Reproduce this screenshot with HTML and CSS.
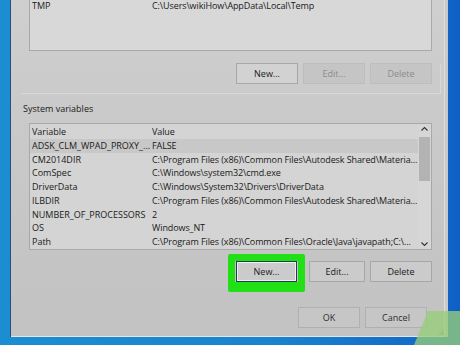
FILE: index.html
```html
<!DOCTYPE html>
<html>
<head>
<meta charset="utf-8">
<link rel="stylesheet" href="styles.css">
</head>
<body>
<div class="screen">
  <div class="dialog">
    <div class="listbox user-list">
      <div class="row tmp"><span class="c1">TMP</span><span class="c2">C:\Users\wikiHow\AppData\Local\Temp</span></div>
    </div>
    <div class="btnrow top-btns">
      <button class="btn">New...</button>
      <button class="btn disabled">Edit...</button>
      <button class="btn disabled">Delete</button>
    </div>
    <div class="sep"></div>
    <div class="label">System variables</div>
    <div class="listbox sys-list">
      <div class="table">
        <div class="row head"><span class="c1">Variable</span><span class="c2">Value</span></div>
        <div class="row selected"><span class="c1">ADSK_CLM_WPAD_PROXY_...</span><span class="c2">FALSE</span></div>
        <div class="row"><span class="c1">CM2014DIR</span><span class="c2">C:\Program Files (x86)\Common Files\Autodesk Shared\Materia...</span></div>
        <div class="row"><span class="c1">ComSpec</span><span class="c2">C:\Windows\system32\cmd.exe</span></div>
        <div class="row"><span class="c1">DriverData</span><span class="c2">C:\Windows\System32\Drivers\DriverData</span></div>
        <div class="row"><span class="c1">ILBDIR</span><span class="c2">C:\Program Files (x86)\Common Files\Autodesk Shared\Materia...</span></div>
        <div class="row"><span class="c1">NUMBER_OF_PROCESSORS</span><span class="c2">2</span></div>
        <div class="row"><span class="c1">OS</span><span class="c2">Windows_NT</span></div>
        <div class="row"><span class="c1">Path</span><span class="c2">C:\Program Files (x86)\Common Files\Oracle\Java\javapath;C:\...</span></div>
      </div>
      <div class="scrollbar">
        <svg class="arrow" width="13" height="10" viewBox="0 0 13 10"><path d="M3.5 6.5 L6.5 3.5 L9.5 6.5" fill="none" stroke="#333" stroke-width="1.1"/></svg>
        <div class="track"><div class="thumb"></div></div>
        <svg class="arrow" width="13" height="10" viewBox="0 0 13 10"><path d="M3.5 3.5 L6.5 6.5 L9.5 3.5" fill="none" stroke="#333" stroke-width="1.1"/></svg>
      </div>
    </div>
    <div class="btnrow sys-btns">
      <div class="highlight-wrap"><button class="btn focused">New...</button></div>
      <button class="btn edit2">Edit...</button>
      <button class="btn">Delete</button>
    </div>
    <div class="btnrow ok-btns">
      <button class="btn plain">OK</button>
      <button class="btn plain">Cancel</button>
    </div>
    <div class="grip"></div>
  </div>
</div>
<svg class="watermark" width="46" height="34" viewBox="0 0 46 34"><polygon points="14,0 46,0 46,34 0,34" fill="rgba(150,205,120,0.78)"/></svg>
</body>
</html>
```
FILE: styles.css
```css
* { box-sizing: border-box; }
html, body { margin: 0; padding: 0; }
body {
  width: 460px;
  height: 345px;
  overflow: hidden;
  background: linear-gradient(to right, #1b8ed3 0%, #1883cf 60%, #1268c9 95%, #0f5fc6 100%);
  font-family: "Open Sans", "Noto Sans", sans-serif;
  font-size: 9px;
  color: #1a1a1a;
  position: relative;
}
.screen {
  padding: 0 12px 8px 10px;
}
.dialog {
  position: relative;
  height: 337px;
  background: linear-gradient(to bottom, #cfcfcf 0%, #c9c9c9 40%, #c2c2c2 100%);
  border-left: 1px solid #2a4f70;
  box-shadow: inset -3px 0 0 #c9c9c9, inset -4px 0 0 #dedede, inset 0 -1px 0 #e6e6e6;
  padding: 0 16px 0 18px;
  display: flex;
  flex-direction: column;
}
.listbox {
  border: 1px solid #a9a9a9;
  background: #d7d7d7;
  overflow: hidden;
}
.user-list {
  height: 51px;
  border-top: none;
  background: #d8d8d8;
}
.row {
  display: flex;
  height: 13.75px;
  line-height: 13.75px;
  white-space: nowrap;
  padding-left: 2px;
}
.row .c1 { width: 120px; flex: none; overflow: hidden; }
.row .c2 { flex: 1; overflow: hidden; letter-spacing: -0.1px; }
.row.tmp { height: 11px; line-height: 11px; }
.btnrow {
  display: flex;
  justify-content: flex-end;
}
.btn {
  font-family: inherit;
  font-size: 9px;
  color: #1a1a1a;
  height: 21px;
  width: 62px;
  padding: 0;
  border: 1px solid #a7a7a7;
  background: #d2d2d2;
  margin: 0;
}
.top-btns { margin-top: 12px; gap: 5px; }
.top-btns .btn.disabled {
  background: #c5c5c5;
  border-color: #bdbdbd;
  color: #8c8c8c;
}
.sep {
  position: relative;
  margin: 9px -9px 0 -8px;
  height: 1px;
  background: #d9d9d9;
}
.sep::after {
  content: "";
  position: absolute;
  right: 0;
  bottom: 0;
  width: 1px;
  height: 30px;
  background: #d9d9d9;
}
.label {
  margin-top: 9px;
  margin-left: -6px;
  line-height: 12px;
  height: 12px;
}
.sys-list {
  margin-top: 8px;
  height: 127px;
  display: flex;
  background: #d4d4d4;
}
.table {
  flex: 1;
  padding-top: 1px;
  overflow: hidden;
}
.row.selected { background: #c8c8c8; }
.scrollbar {
  width: 13px;
  flex: none;
  display: flex;
  flex-direction: column;
  background: #d6d6d6;
}
.arrow { display: block; flex: none; }
.track { flex: 1; padding-top: 3px; }
.thumb {
  height: 44px;
  background: #b3b3b3;
  margin: 0 1px;
}
.sys-btns {
  margin-top: 11px;
  align-items: flex-start;
}
.highlight-wrap {
  position: relative;
  margin-right: 12px;
}
.highlight-wrap::before {
  content: "";
  position: absolute;
  left: -8px;
  right: -8px;
  top: -7px;
  bottom: -10px;
  border: 7px solid #22e016;
  border-bottom-width: 10px;
  border-radius: 2px;
}
.btn.focused {
  width: 61px;
  background: #e4e4e4;
  border: 1px solid #1f3b58;
  box-shadow: inset 0 0 0 1px #f0f0f0;
}
.sys-btns .btn.edit2 { width: 56px; margin-right: 5px; background: #cbcbcb; }
.sys-btns .btn:last-child { background: #cbcbcb; }
.ok-btns {
  margin-top: 25px;
  margin-right: 5px;
  gap: 5px;
}
.btn.plain {
  background: #c6c6c6;
  border-color: #b0b0b0;
  color: #303030;
}
.grip {
  position: absolute;
  right: 4px;
  bottom: 2px;
  width: 6px;
  height: 6px;
  background: radial-gradient(circle, #8a8a8a 0.6px, transparent 0.9px) 0 0 / 2px 2px;
  clip-path: polygon(100% 0, 100% 100%, 0 100%);
}
.watermark {
  position: absolute;
  right: 0;
  bottom: 0;
  display: block;
}
```
